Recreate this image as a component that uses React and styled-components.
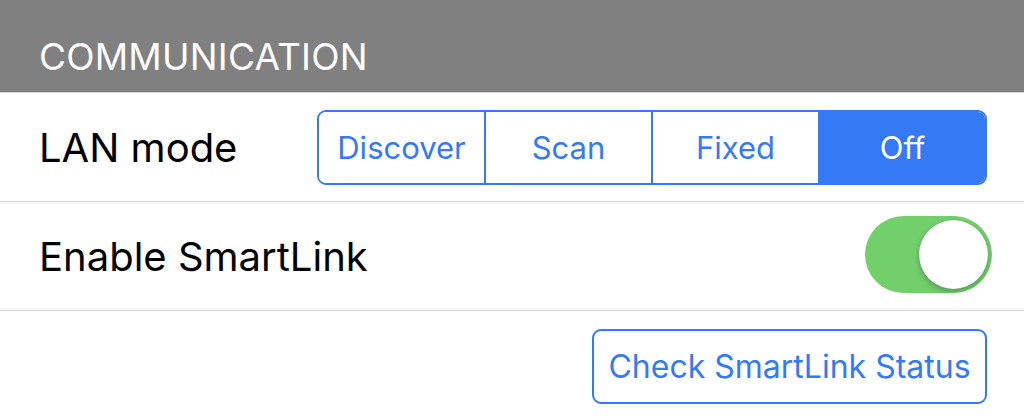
import React from 'react';
import styled, { createGlobalStyle } from 'styled-components';

const GlobalStyle = createGlobalStyle`
  html, body {
    margin: 0;
    padding: 0;
    background: #fff;
    font-family: Inter, "Noto Sans", sans-serif;
  }
`;

const BLUE = '#3679f5';

const Page = styled.div`
  width: 1024px;
  height: 416px;
  overflow: hidden;
  background: #fff;
`;

const SectionHeader = styled.div`
  height: 93px;
  background: #808080;
  border-bottom: 1px solid #d0d0d0;
  box-sizing: border-box;
  display: flex;
  align-items: flex-end;
  padding: 0 0 13px 39px;
  color: #fff;
  font-size: 37px;
  letter-spacing: 0.2px;
`;

const Row = styled.div`
  height: ${p => p.$h}px;
  display: flex;
  align-items: center;
  justify-content: ${p => (p.$end ? 'flex-end' : 'space-between')};
  padding: 0 ${p => p.$pr}px 0 39px;
  border-bottom: ${p => (p.$last ? 'none' : '1px solid #d6d6d6')};
  box-sizing: border-box;
`;

const Label = styled.span`
  font-size: 40px;
  color: #000;
`;

const Segmented = styled.div`
  display: flex;
  width: 670px;
  height: 75px;
  border: 2px solid ${BLUE};
  border-radius: 9px;
  box-sizing: border-box;
  overflow: hidden;
`;

const Segment = styled.div`
  flex: 1;
  display: flex;
  align-items: center;
  justify-content: center;
  font-size: 31px;
  color: ${p => (p.$active ? '#fff' : BLUE)};
  background: ${p => (p.$active ? BLUE : '#fff')};
  & + & {
    border-left: 2px solid ${BLUE};
  }
`;

const Toggle = styled.div`
  position: relative;
  width: 127px;
  height: 77px;
  margin-bottom: 4px;
  border-radius: 39px;
  background: #72d06b;
`;

const Knob = styled.div`
  position: absolute;
  top: 4px;
  right: 4px;
  width: 69px;
  height: 69px;
  border-radius: 50%;
  background: #fff;
  box-shadow: 0 3px 6px rgba(0, 0, 0, 0.25), 0 0 1px rgba(0, 0, 0, 0.2);
`;

const OutlineButton = styled.button`
  width: 395px;
  height: 75px;
  border: 2px solid ${BLUE};
  border-radius: 9px;
  background: #fff;
  color: ${BLUE};
  font-family: inherit;
  font-size: 32px;
  padding: 0;
  margin-top: 5px;
`;

const modes = ['Discover', 'Scan', 'Fixed', 'Off'];

export default function App() {
  return (
    <Page>
      <GlobalStyle />
      <SectionHeader>COMMUNICATION</SectionHeader>
      <Row $h={109} $pr={37}>
        <Label>LAN mode</Label>
        <Segmented>
          {modes.map(m => (
            <Segment key={m} $active={m === 'Off'}>{m}</Segment>
          ))}
        </Segmented>
      </Row>
      <Row $h={109} $pr={32}>
        <Label>Enable SmartLink</Label>
        <Toggle>
          <Knob />
        </Toggle>
      </Row>
      <Row $h={105} $pr={37} $end $last>
        <OutlineButton>Check SmartLink Status</OutlineButton>
      </Row>
    </Page>
  );
}
